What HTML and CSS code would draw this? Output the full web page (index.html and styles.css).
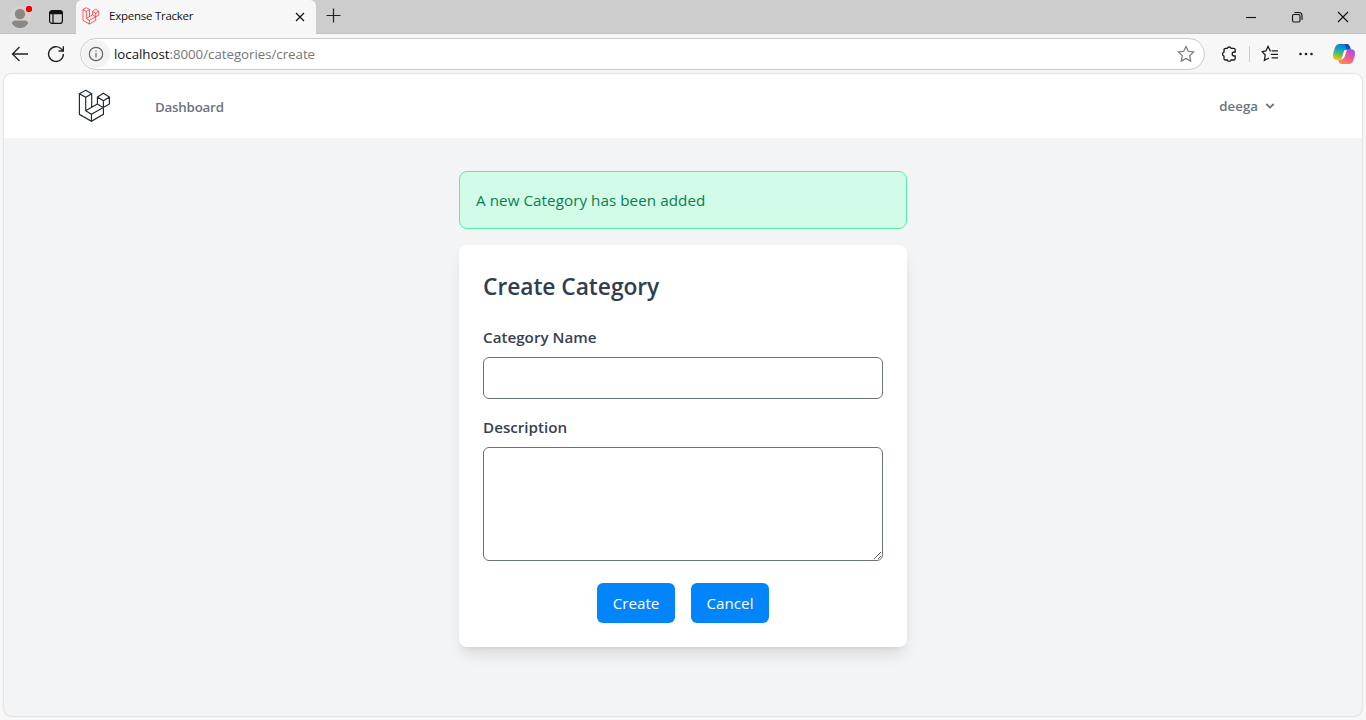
FILE: index.html
```html
<!DOCTYPE html>
<html lang="en">
<head>
<meta charset="utf-8">
<title>Expense Tracker</title>
<link rel="stylesheet" href="styles.css">
</head>
<body>
<svg class="defs" width="0" height="0">
  <symbol id="laravel" viewBox="0 0 33 34">
    <path d="M7.7 1.3 13.7 4.7 7.7 8.3 1.4 4.7ZM1.4 4.7V25.3L13.4 32.3 25.4 25.3V11.7M7.7 8.3V21.7L13.4 25.3 31.4 15V8L25.4 4.3 19.4 8V15L7.7 21.7M13.7 4.7V18.3M19.4 8 25.4 11.7 31.4 8M19.4 15 25.4 18.7M13.4 25.3V32.3"/>
  </symbol>
</svg>
<div class="browser">
  <header class="tabs">
    <svg class="avatar" width="24" height="26" viewBox="0 0 24 26"><circle cx="12" cy="13" r="11" fill="#d5d1ce"/><circle cx="12" cy="10" r="5.2" fill="#8b8783"/><path d="M4 19.5Q4 16.5 7.5 16.5H16.5Q20 16.5 20 19.5Q17 24 12 24T4 19.5Z" fill="#8b8783"/><circle cx="21" cy="5" r="4" fill="#dedede"/><circle cx="21" cy="5" r="3.2" fill="#f00000"/></svg>
    <svg class="workspace" width="16" height="16" viewBox="0 0 16 16"><rect x="1.6" y="1.6" width="12.8" height="12.8" rx="2.5" fill="none" stroke="#111" stroke-width="1.2"/><path d="M1.5 5.2V4Q1.5 1.5 4 1.5H12Q14.5 1.5 14.5 4V5.2ZM4.4 5h1.2v9.5H4.4Z" fill="#111"/></svg>
    <div class="tab">
      <svg class="favicon" width="18" height="18"><use href="#laravel"/></svg>
      <span class="tab-title">Expense Tracker</span>
      <svg class="tab-close" width="10" height="10" viewBox="0 0 10 10"><path d="M1 1 9 9M9 1 1 9"/></svg>
    </div>
    <svg class="plus" width="15" height="15" viewBox="0 0 15 15"><path d="M7.5 .5v14M.5 7.5h14"/></svg>
    <div class="window-buttons">
      <svg width="12" height="12" viewBox="0 0 12 12"><path d="M1 6.5h10"/></svg>
      <svg width="12" height="12" viewBox="0 0 12 12"><rect x="1.5" y="3.5" width="7.5" height="7.5" rx="1.5"/><path d="M3.5 1.5H8Q11 1.5 11 4.5V9"/></svg>
      <svg width="12" height="12" viewBox="0 0 12 12"><path d="M1 1 11 11M11 1 1 11"/></svg>
    </div>
  </header>
  <div class="toolbar">
    <svg class="back" width="18" height="16" viewBox="0 0 18 16"><path d="M8.5 1 1.5 8 8.5 15M1.5 8H17"/></svg>
    <svg class="reload" width="18" height="18" viewBox="0 0 18 18"><path d="M16.4 9A7.4 7.4 0 1 1 14.5 4.1L16 5.8M16.3 1.2V6H11.5"/></svg>
    <div class="address">
      <span class="info"><svg width="16" height="16" viewBox="0 0 16 16"><circle cx="8" cy="8" r="6.7"/><path d="M8 7v4.4M8 4.4v1.3"/></svg></span>
      <span class="url"><b>localhost</b>:8000/categories/create</span>
      <svg class="star" width="18" height="18" viewBox="0 0 18 18"><path d="M9 1.5 11.3 6.3 16.6 7 12.7 10.6 13.7 16 9 13.4 4.3 16 5.3 10.6 1.4 7 6.7 6.3Z"/></svg>
    </div>
    <div class="tools">
      <svg class="puzzle" width="16" height="18" viewBox="0 0 16 18"><path d="M4.4 3.4H6.3A2 2 0 0 1 10.1 3.4H12.6Q14.2 3.4 14.2 5V7H13.2A2 2 0 0 0 13.2 11H14.2V13.4Q14.2 15 12.6 15H10.1A2 2 0 0 1 6.3 15H4.6Q3 15 3 13.4V11.1A2.1 2.1 0 0 1 3 7.1V5Q3 3.4 4.6 3.4"/></svg>
      <i class="divider"></i>
      <svg class="favorites" width="18" height="18" viewBox="0 0 18 18"><path d="M9.8 5.9H9.2L7 1.4 4.9 5.9 1.2 6.6 4.2 10 3.4 15.3 8 13M10.6 5.9h6.4M9.8 9.4h7.2M10.6 12.9h6.4"/></svg>
      <svg class="more" width="16" height="4" viewBox="0 0 16 4"><circle cx="2.5" cy="2" r="1.3"/><circle cx="8" cy="2" r="1.3"/><circle cx="13.5" cy="2" r="1.3"/></svg>
      <svg class="copilot" width="24" height="22" viewBox="0 0 24 22">
        <defs>
          <linearGradient id="cool" x1=".6" y1="0" x2=".3" y2="1"><stop stop-color="#087bd8"/><stop offset=".4" stop-color="#15a8c3"/><stop offset=".7" stop-color="#77bd4b"/><stop offset="1" stop-color="#f6c814"/></linearGradient>
          <linearGradient id="warm" x1=".8" y1="0" x2=".3" y2="1"><stop stop-color="#a44ee2"/><stop offset=".5" stop-color="#f0589c"/><stop offset="1" stop-color="#ff8b42"/></linearGradient>
        </defs>
        <path d="M7.5 1H15Q17 1 18 4L18.7 6.5H16Q13 6.5 12 10L10.5 15Q10 17 7.5 17H5Q1 17 1 12.5 1 10 2 7.5L3.3 4Q4.5 1 7.5 1Z" fill="url(#cool)"/>
        <path d="M12 1H15Q17 1 18 4L18.7 6.5H14.5Q13.5 2 12 1Z" fill="#1748c8"/>
        <path d="M16 6.3H19Q23 6.3 23 10.5 23 13 22 15.5L20.8 18.7Q19.5 21 17 21H9.5Q7 21 6.2 17H8.2Q10.8 17 11.7 14L13.3 9Q14 6.3 16 6.3Z" fill="url(#warm)"/>
        <path d="M12.2 7.2H15Q14.4 8 14.1 9.2L12.5 14Q11.8 15.6 9.2 15.6 10 15 10.4 13.4Z" fill="#fff"/>
      </svg>
    </div>
  </div>
  <div class="page">
    <nav class="nav">
      <svg class="logo" width="33" height="34"><use href="#laravel"/></svg>
      <a class="nav-link">Dashboard</a>
      <span class="user">deega</span>
      <svg class="chevron" width="10" height="8" viewBox="0 0 10 8"><path d="M1.3 2 5 5.6 8.7 2"/></svg>
    </nav>
    <main class="content">
      <div class="alert"><span>A new Category has been added</span></div>
      <form class="card">
        <h1 class="title"><span>Create Category</span></h1>
        <label class="label" for="name"><span>Category Name</span></label>
        <input class="field" id="name" type="text">
        <label class="label" for="description"><span>Description</span></label>
        <textarea class="field area" id="description"></textarea>
        <div class="actions">
          <button class="button" type="button">Create</button>
          <button class="button cancel" type="button">Cancel</button>
        </div>
      </form>
    </main>
  </div>
</div>
</body>
</html>
```
FILE: styles.css
```css
* { box-sizing: border-box; }
body { margin: 0; overflow: hidden; font-family: "Open Sans", sans-serif; }
svg { display: block; flex: none; fill: none; }
.defs { position: absolute; }
.browser { height: 720px; display: flex; flex-direction: column; background: #f7f7f7; }

.tabs { height: 34px; flex: none; display: flex; align-items: center; background: #cdcdcd; border-bottom: 1px solid #c3c3c3; }
.avatar { margin: 0 0 0 8px; }
.workspace { margin-left: 16px; }
.tab { width: 240px; height: 34px; margin: 0 0 -1px 12px; padding: 0 11px 2px 6px; display: flex; align-items: center; background: #f7f7f7; border-radius: 6px 6px 0 0; }
.favicon { stroke: #f8434a; stroke-width: 1.7; }
.tab-title { margin-left: 9px; font-size: 11.5px; line-height: 16px; letter-spacing: -.25px; color: #111; }
.tab-close { margin: 1px 0 0 auto; stroke: #111; stroke-width: 1.2; }
.plus { margin: 0 0 2px 10px; stroke: #222; stroke-width: 1.2; }
.window-buttons { margin: 1px 17px 0 auto; display: flex; gap: 34px; stroke: #111; stroke-width: 1.1; }

.toolbar { height: 40px; flex: none; display: flex; align-items: center; }
.back { margin-left: 11px; stroke: #222; stroke-width: 1.3; }
.reload { margin-left: 18px; stroke: #222; stroke-width: 1.4; }
.address { width: 1125px; height: 32px; margin-left: 15px; padding: 0 9px 0 1px; display: flex; align-items: center; background: #fff; border: 1px solid #ccc; border-radius: 16px; }
.info { width: 28px; height: 28px; border-radius: 50%; background: #f3f3f3; display: flex; align-items: center; justify-content: center; stroke: #666; stroke-width: 1.2; }
.url { margin-left: 4px; font-size: 13.3px; line-height: 20px; letter-spacing: -.03px; color: #767676; white-space: nowrap; }
.url b { font-weight: 400; color: #111; }
.star { margin-left: auto; stroke: #777; stroke-width: 1.2; }
.tools { display: flex; align-items: center; flex: 1; stroke: #1b1b1b; stroke-width: 1.3; }
.puzzle { margin-left: 16px; }
.divider { width: 1px; height: 16px; margin-left: 12px; background: #ccc; }
.favorites { margin-left: 11px; }
.more { margin-left: 19px; fill: #1b1b1b; stroke: none; }
.copilot { margin-left: 18px; stroke: none; }

.page { height: 642px; margin: 0 4px; flex: none; overflow: hidden; background: #f3f4f6; border-radius: 8px; box-shadow: 0 0 2px rgba(0, 0, 0, .28); }
.nav { height: 64px; padding: 0 87px 0 74px; display: flex; align-items: center; background: #fff; color: #6b7280; font-size: 13.3px; font-weight: 600; line-height: 20px; }
.logo { stroke: #1f2937; stroke-width: 1.15; }
.nav-link { margin: 1px 0 0 44px; letter-spacing: -.2px; }
.user { margin-left: auto; }
.chevron { margin-left: 7px; stroke: #6b7280; stroke-width: 1.8; }
.content { width: 448px; margin: 33px auto 0; }
.alert { height: 58px; padding: 16px; background: #d3fce8; border: 1px solid #54edb0; border-radius: 8px; color: #07804f; font-size: 15.2px; line-height: 24px; letter-spacing: .06px; }
.card { height: 402px; margin-top: 16px; padding: 26px 24px 24px; background: #fff; border-radius: 8px; box-shadow: 0 10px 15px -3px rgba(0, 0, 0, .1), 0 4px 6px -4px rgba(0, 0, 0, .1); }
.title { margin: 0 0 22px; font-size: 22.8px; font-weight: 600; line-height: 32px; letter-spacing: -.06px; color: #2f3e50; }
.label { display: block; margin-bottom: 8px; font-size: 15.2px; font-weight: 600; line-height: 24px; color: #374151; }
.field { display: block; width: 400px; height: 42px; margin: 0 0 16px; border: 1px solid #6b7280; border-radius: 6px; background: #fff; outline: none; }
.area { height: 114px; margin-bottom: 22px; resize: vertical; }
.actions { display: flex; justify-content: center; gap: 16px; }
.button { width: 78px; height: 40px; padding: 0; border: 0; border-radius: 6px; background: #0284fa; color: #fff; font: 400 15.2px/24px "Open Sans", sans-serif; }
```
